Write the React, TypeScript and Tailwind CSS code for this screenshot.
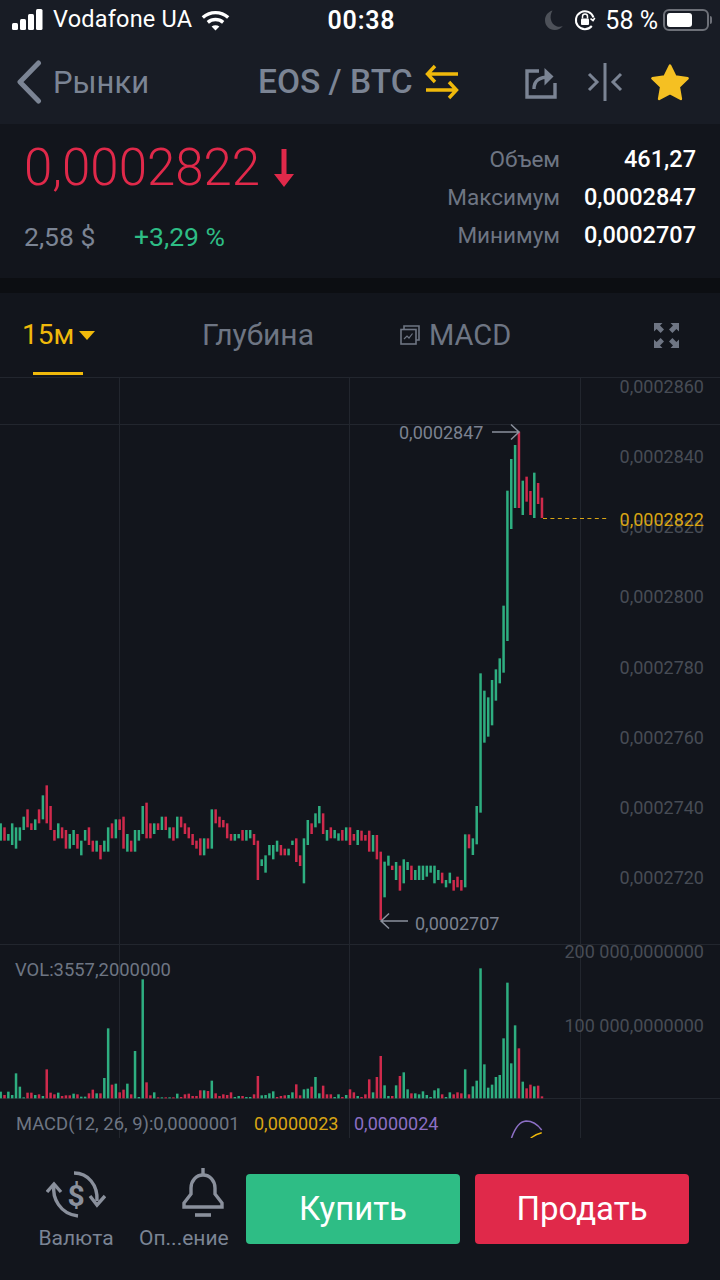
import React from "react";

type Side = "g" | "r";
type Candle = [number, number, Side];
type Vol = [number, Side];

const GREEN = "#2eae80";
const RED = "#cf2a4c";

// wick top/bottom, read off the chart (3x units, first run starts at y=770, second at y=660)
const candlesA: Candle[] = [
  [160,212,"g"],[172,212,"r"],[192,212,"g"],[160,225,"g"],[172,236,"g"],[172,212,"g"],[140,180,"g"],[118,172,"r"],[160,180,"r"],[148,180,"g"],
  [118,160,"r"],[76,148,"g"],[46,160,"r"],[108,180,"r"],[180,212,"r"],[160,205,"g"],[172,205,"r"],[180,236,"r"],[192,236,"g"],[180,225,"g"],
  [192,236,"r"],[212,256,"g"],[180,212,"g"],[172,225,"r"],[212,245,"r"],[212,245,"g"],[225,268,"r"],[212,245,"g"],[172,245,"g"],[160,205,"r"],
  [148,205,"g"],[148,180,"r"],[140,236,"r"],[192,245,"g"],[212,245,"r"],[180,245,"g"],[180,212,"g"],[108,192,"g"],[98,205,"r"],[160,205,"r"],
  [160,192,"g"],[160,180,"r"],[140,180,"g"],[140,180,"r"],[172,205,"g"],[172,212,"r"],[140,205,"g"],[140,172,"r"],[160,192,"r"],[172,205,"r"],
  [192,225,"r"],[212,236,"r"],[205,256,"r"],[205,256,"g"],[205,236,"r"],[118,236,"g"],[118,160,"r"],[140,172,"r"],[150,172,"r"],[160,205,"r"],
  [192,212,"r"],[192,212,"g"],[192,205,"g"],[180,212,"r"],[180,212,"g"],[180,205,"g"],[192,225,"r"],[212,330,"r"],[268,288,"g"],[256,308,"g"],
  [225,256,"g"],[225,268,"g"],[212,245,"g"],[225,256,"r"],[236,256,"r"],[236,256,"g"],[212,225,"g"],[205,276,"r"],[256,288,"r"],[205,340,"g"],
  [150,225,"g"],[160,192,"r"],[130,172,"g"],[108,160,"g"],[130,192,"r"],[180,212,"g"],[172,205,"r"],[180,205,"g"],[190,212,"g"],[180,212,"r"],
  [172,212,"g"],[172,225,"r"],[192,212,"r"],[180,225,"g"],
];

const candlesB: Candle[] = [
  [512,542,"r"],[525,542,"r"],[512,575,"r"],[525,575,"g"],[525,598,"r"],[575,780,"r"],[605,712,"g"],[587,617,"g"],[617,630,"r"],[606,660,"g"],
  [617,692,"r"],[598,670,"g"],[606,630,"g"],[617,660,"r"],[630,660,"g"],[617,660,"g"],[617,660,"g"],[617,650,"g"],[617,638,"g"],[617,670,"g"],
  [630,660,"g"],[638,670,"r"],[660,682,"g"],[638,670,"g"],[660,692,"r"],[650,682,"r"],[660,692,"r"],[523,682,"g"],[523,565,"r"],[535,585,"g"],
  [438,553,"g"],[40,458,"g"],[92,248,"g"],[112,230,"g"],[60,196,"g"],[28,122,"g"],[-5,70,"g"],[-163,38,"g"],[-508,-57,"g"],[-603,-393,"g"],
  [-645,-456,"g"],[-685,-456,"r"],[-538,-435,"g"],[-550,-475,"r"],[-507,-435,"r"],[-562,-426,"g"],[-531,-468,"r"],[-487,-426,"r"],
];

// bar tops in 3x units, zero line at 445, origin y=950
const volumes: Vol[] = [
  [425,"g"],[435,"r"],[425,"g"],[435,"g"],[370,"g"],[410,"g"],[442,"g"],[428,"r"],[428,"r"],[435,"g"],
  [433,"r"],[438,"g"],[358,"r"],[428,"r"],[433,"r"],[428,"g"],[438,"r"],[436,"r"],[436,"r"],[431,"g"],
  [433,"r"],[440,"g"],[440,"g"],[430,"r"],[419,"r"],[430,"g"],[430,"r"],[384,"g"],[235,"g"],[404,"r"],
  [401,"g"],[427,"r"],[419,"r"],[401,"g"],[433,"r"],[303,"g"],[441,"g"],[88,"g"],[397,"r"],[436,"r"],
  [427,"g"],[442,"r"],[442,"g"],[442,"r"],[442,"g"],[442,"r"],[431,"g"],[441,"r"],[433,"r"],[431,"r"],
  [438,"r"],[438,"r"],[421,"r"],[421,"g"],[423,"r"],[392,"g"],[430,"r"],[438,"r"],[433,"r"],[435,"r"],
  [427,"r"],[441,"g"],[438,"g"],[438,"r"],[441,"g"],[441,"g"],[433,"r"],[378,"r"],[436,"g"],[435,"g"],
  [430,"g"],[424,"g"],[441,"r"],[438,"r"],[436,"r"],[435,"g"],[427,"g"],[403,"r"],[436,"r"],[418,"g"],
  [416,"g"],[410,"r"],[381,"g"],[430,"g"],[407,"r"],[433,"r"],[433,"r"],[441,"g"],[433,"g"],[441,"r"],
  [435,"g"],[418,"r"],[427,"r"],[438,"g"],
  [441,"r"],[433,"r"],[388,"r"],[427,"g"],[381,"r"],[318,"r"],[406,"g"],[438,"g"],[438,"r"],[406,"g"],
  [378,"r"],[367,"g"],[418,"g"],[430,"r"],[430,"g"],[433,"g"],[424,"g"],[435,"g"],[441,"g"],[421,"g"],
  [415,"g"],[433,"r"],[441,"g"],[427,"g"],[433,"r"],[427,"r"],[430,"r"],[358,"g"],[433,"r"],[409,"g"],
  [392,"g"],[55,"g"],[343,"g"],[413,"g"],[404,"g"],[381,"g"],[375,"g"],[265,"g"],[98,"g"],[340,"g"],
  [226,"g"],[295,"r"],[395,"g"],[415,"r"],[404,"r"],[409,"g"],[407,"r"],[439,"r"],
];

const STEP = 3.839;
const colX = (i: number) => 0.67 + i * STEP - 1.25;

const axisLabels = [
  { text: "0,0002860", cls: "top-0" },
  { text: "0,0002840", cls: "top-[70px]" },
  { text: "0,0002820", cls: "top-[140px]" },
  { text: "0,0002800", cls: "top-[210px]" },
  { text: "0,0002780", cls: "top-[281px]" },
  { text: "0,0002760", cls: "top-[351px]" },
  { text: "0,0002740", cls: "top-[421px]" },
  { text: "0,0002720", cls: "top-[491px]" },
  { text: "200 000,0000000", cls: "top-[565px]" },
  { text: "100 000,0000000", cls: "top-[639px]" },
];

const ChartDrawing = () => (
  <svg className="absolute inset-0" width="720" height="761" viewBox="0 377 720 761">
    <g stroke="#22262e" strokeWidth="1">
      <path d="M0 377.5H720M0 424.5H720M0 944.5H720M0 1098.5H720" />
      <path d="M119.5 377V1138M349.5 377V1138M580.5 377V1138" />
    </g>
    {candlesA.map(([t, b, c], i) => (
      <rect key={i} x={colX(i)} y={770 + t / 3} width="2.5" height={(b - t) / 3} fill={c === "g" ? GREEN : RED} />
    ))}
    {candlesB.map(([t, b, c], i) => (
      <rect key={i} x={colX(i + 94)} y={660 + t / 3} width="2.5" height={(b - t) / 3} fill={c === "g" ? GREEN : RED} />
    ))}
    {volumes.map(([t, c], i) => (
      <rect key={i} x={colX(i)} y={950 + t / 3} width="2.5" height={(445 - t) / 3} fill={c === "g" ? GREEN : RED} />
    ))}
    <path d="M543 518.5H607" stroke="#d9a514" strokeWidth="1" strokeDasharray="4 3.4" />
    <path d="M492 432H519M511 424.5L519 432L511 439.5" stroke="#8a909c" strokeWidth="1.5" fill="none" />
    <path d="M408 921H381M389 913.5L381 921L389 928.5" stroke="#8a909c" strokeWidth="1.5" fill="none" />
    <path d="M511.5 1138C515 1128 519 1121.5 526 1121C533 1121 538 1125 541.7 1130" stroke="#8c6fc4" strokeWidth="1.5" fill="none" />
    <path d="M530.7 1138C534 1135.5 538 1133.5 541.7 1132.7" stroke="#f0b90b" strokeWidth="1.5" fill="none" />
  </svg>
);

const StatusBar = () => (
  <div className="grid h-[40px] grid-cols-3 items-center pl-3 pr-2 text-white">
    <div className="flex items-center">
      <svg width="32" height="22" viewBox="0 0 32 22" fill="#fff">
        <rect x="0" y="14" width="6" height="7" rx="1.5" />
        <rect x="8" y="10" width="6" height="11" rx="1.5" />
        <rect x="16" y="5" width="6" height="16" rx="1.5" />
        <rect x="24" y="0" width="6.5" height="21" rx="1.5" />
      </svg>
      <span className="ml-[9px] text-[23.5px] leading-none tracking-[0.2px] whitespace-nowrap">Vodafone UA</span>
      <svg className="ml-[9px] shrink-0" width="29" height="21" viewBox="0 0 29 21" fill="none" stroke="#fff" strokeWidth="3.4">
        <path d="M1.8 7.6C9.2 1 19.8 1 27.2 7.6" />
        <path d="M6.8 12.4C11.3 8.6 17.7 8.6 22.2 12.4" />
        <path d="M14.5 20.5L10.6 16.4C12.9 14.8 16.1 14.8 18.4 16.4Z" fill="#fff" stroke="none" />
      </svg>
    </div>
    <div className="pr-[1px] text-center text-[25px] leading-none font-semibold tracking-[0.8px]">00:38</div>
    <div className="flex items-center justify-end">
      <svg width="20" height="22" viewBox="0 0 20 22" fill="#4d5159">
        <path d="M8.5 1.5C5 7 6.2 15 13 17.4C15 18 17 18 18.8 17C16.8 19.8 13.9 21 10.8 21C5.4 21 1 16.8 1 11.2C1 6.6 4 2.8 8.5 1.5Z" />
      </svg>
      <svg className="ml-[10px]" width="22" height="22" viewBox="0 0 22 22" fill="none" stroke="#fff" strokeWidth="2">
        <path d="M19.5 8.5A9 9 0 1 0 17.8 17" />
        <path d="M20.8 9L19 11.5L16.5 9.6" strokeWidth="1.6" />
        <rect x="7" y="9.5" width="8" height="6.5" rx="1" fill="#fff" stroke="none" />
        <path d="M8.5 9.5V7.5A2.5 2.5 0 0 1 13.5 7.5V9.5" strokeWidth="1.5" />
      </svg>
      <span className="ml-[9px] text-[25px] leading-none whitespace-nowrap">58 %</span>
      <div className="ml-[5px] flex items-center">
        <div className="flex h-[22px] w-[46px] items-center rounded-[6px] border-2 border-[#6d7078] p-[2px]">
          <div className="h-full w-[25px] rounded-[3px] bg-white" />
        </div>
        <div className="ml-[1px] h-[8px] w-[2px] rounded-r bg-[#6d7078]" />
      </div>
    </div>
  </div>
);

const NavBar = () => (
  <div className="flex h-[84px] items-center text-[#7b8494]">
    <svg className="ml-[16px] shrink-0" width="26" height="44" viewBox="0 0 26 44" fill="none" stroke="#7b8494" strokeWidth="5" strokeLinecap="round" strokeLinejoin="round">
      <path d="M22.5 3L4 22L22.5 41" />
    </svg>
    <span className="ml-[11px] w-[205px] text-[31px] leading-none">Рынки</span>
    <span className="w-[167px] text-[33.5px] leading-none font-medium whitespace-nowrap">EOS / BTC</span>
    <svg className="shrink-0" width="34" height="36" viewBox="0 0 34 36" fill="none" stroke="#f0b90b" strokeWidth="3.4">
      <path d="M33 10H3M10 2L2.5 10L10 18" />
      <path d="M1 26H31M24 18L31.5 26L24 34" />
    </svg>
    <svg className="ml-[66px] shrink-0" width="32" height="34" viewBox="0 0 32 34" fill="none" stroke="#7b8494" strokeWidth="3.4">
      <path d="M14 6H2V32H30V18" />
      <path d="M9 24C9 15.5 14 12 25 12" />
      <path d="M19.5 3L28.5 11.5L19.5 20.5" fill="#7b8494" strokeWidth="0" />
    </svg>
    <svg className="ml-[30px] shrink-0" width="36" height="38" viewBox="0 0 36 38" fill="none" stroke="#7b8494" strokeWidth="3">
      <path d="M18 0V38" />
      <path d="M2 11L10 19L2 27M34 11L26 19L34 27" />
    </svg>
    <svg className="ml-[27px] shrink-0" width="40" height="38" viewBox="0 0 40 38">
      <path fill="#f5c022" stroke="#f5c022" strokeWidth="2.5" strokeLinejoin="round" d="M20 2.5L25.4 13.6L37.6 15.3L28.8 23.8L30.9 36L20 30.2L9.1 36L11.2 23.8L2.4 15.3L14.6 13.6Z" />
    </svg>
  </div>
);

const statRows = [
  { label: "Объем", value: "461,27" },
  { label: "Максимум", value: "0,0002847" },
  { label: "Минимум", value: "0,0002707" },
];

const PricePanel = () => (
  <div className="flex h-[154px] justify-between bg-[#12151c] pr-6 pl-6">
    <div>
      <div className="mt-[14px] flex items-center">
        <span className="text-[51px] leading-[60px] font-light tracking-[0px] text-[#e0294a]">0,0002822</span>
        <svg className="ml-[13px]" width="22" height="42" viewBox="0 0 22 42" fill="#e0294a">
          <path d="M8.5 2H13.5V27H21L11 40L1 27H8.5Z" />
        </svg>
      </div>
      <div className="mt-[24px] flex text-[26.5px] leading-[30px]">
        <span className="w-[110px] text-[#7b8494]">2,58 $</span>
        <span className="text-[#2ebd85]">+3,29 %</span>
      </div>
    </div>
    <div className="mt-[16px] grid grid-cols-[auto_136px] content-start text-[22.5px] leading-[38px]">
      {statRows.map((r) => (
        <React.Fragment key={r.label}>
          <span className="text-right text-[#6e7583]">{r.label}</span>
          <span className="text-right text-[23.5px] font-medium text-white">{r.value}</span>
        </React.Fragment>
      ))}
    </div>
  </div>
);

const Tabs = () => (
  <div className="flex h-[84px] items-center bg-[#12151c] text-[29px] text-[#6e7583]">
    <div className="relative flex h-full w-[202px] items-center pl-[22px] text-[#f0b90b]">
      <span className="text-[28px] leading-none">15м</span>
      <svg className="ml-[5px]" width="16" height="9" viewBox="0 0 16 9" fill="#f0b90b">
        <path d="M0 0H16L8 9Z" />
      </svg>
      <div className="absolute bottom-[2px] left-[33px] h-[3px] w-[50px] bg-[#f0b90b]" />
    </div>
    <span className="w-[198px] text-[30px] leading-none">Глубина</span>
    <svg className="shrink-0" width="20" height="20" viewBox="0 0 20 20" fill="none" stroke="#6e7583" strokeWidth="1.6">
      <path d="M4 4V1H19V15H16" />
      <rect x="1" y="4.5" width="15" height="14.5" />
      <path d="M4 14L7 11L9 13L12.5 8.5" strokeWidth="1.2" />
    </svg>
    <span className="ml-[9px] w-[225px] leading-none">MACD</span>
    <svg className="shrink-0" width="25" height="25" viewBox="0 0 25 25" fill="#6e7583">
      <path d="M0 0H8.5L6 2.6L10 6.6L6.6 10L2.6 6L0 8.5Z" />
      <path d="M25 0V8.5L22.4 6L18.4 10L15 6.6L19 2.6L16.5 0Z" />
      <path d="M0 25V16.5L2.6 19L6.6 15L10 18.4L6 22.4L8.5 25Z" />
      <path d="M25 25H16.5L19 22.4L15 18.4L18.4 15L22.4 19L25 16.5Z" />
    </svg>
  </div>
);

const Chart = () => (
  <div className="relative flex-1 overflow-hidden bg-[#12151c] text-[18px] leading-[20px] whitespace-nowrap">
    <ChartDrawing />
    {axisLabels.map((a) => (
      <span key={a.text} className={`absolute right-[16px] text-[#474c55] ${a.cls}`}>
        {a.text}
      </span>
    ))}
    <span className="absolute top-[133px] right-[16px] text-[#d9a514]">0,0002822</span>
    <span className="absolute top-[46px] left-[399px] text-[#7b8290]">0,0002847</span>
    <span className="absolute top-[537px] left-[415px] text-[#7b8290]">0,0002707</span>
    <span className="absolute top-[583px] left-[15px] text-[18.4px] text-[#6e7583]">VOL:3557,2000000</span>
    <div className="absolute top-[737px] left-[16px] flex">
      <span className="w-[238px] text-[18.4px] text-[#6e7583]">MACD(12, 26, 9):0,0000001</span>
      <span className="w-[100px] text-[#d9a514]">0,0000023</span>
      <span className="text-[#8c6fc4]">0,0000024</span>
    </div>
  </div>
);

const BottomBar = () => (
  <div className="flex h-[142px] bg-[#12151c] pt-[36px]">
    <div className="ml-[26px] flex w-[100px] flex-col items-center text-[#7b8494]">
      <svg className="-mt-[4px]" width="60" height="50" viewBox="0 0 60 50" fill="none" stroke="#8a909c" strokeWidth="3.4">
        <path d="M8 15C6 28 14 44 32 46" />
        <path d="M1 22L8 14L15 22" />
        <path d="M28 3C42 3 52 15 51 31" />
        <path d="M44 26L51 35L59 26" />
        <text x="30" y="36" textAnchor="middle" fill="#8a909c" stroke="none" fontSize="30" fontWeight="700" fontFamily="Roboto, sans-serif">$</text>
      </svg>
      <span className="mt-[6px] text-[21px] leading-[24px]">Валюта</span>
    </div>
    <div className="ml-[13px] flex w-[90px] flex-col text-[#7b8494]">
      <svg className="-mt-[6px] ml-[43px] shrink-0" width="42" height="52" viewBox="0 0 42 52" fill="none" stroke="#8a909c" strokeWidth="3.4">
        <path d="M21 0V6" />
        <path d="M9 26V20C9 13 14 7 21 7C28 7 33 13 33 20V26L40 35V39H2V35Z" />
        <path d="M13 47H29" strokeWidth="3.6" />
      </svg>
      <span className="mt-[6px] text-[21px] leading-[24px] whitespace-nowrap">Оп...ение</span>
    </div>
    <button className="ml-[17px] flex h-[70px] w-[214px] items-center justify-center rounded-[4px] bg-[#2ebd85] text-[33px] text-white">Купить</button>
    <button className="ml-[15px] flex h-[70px] w-[214px] items-center justify-center rounded-[4px] bg-[#e0294a] text-[33px] text-white">Продать</button>
  </div>
);

export default function App() {
  return (
    <div className="flex h-[1280px] w-[720px] flex-col overflow-hidden bg-[#181c25] font-[Roboto,sans-serif]">
      <StatusBar />
      <NavBar />
      <PricePanel />
      <div className="h-[15px] bg-[#0c0e12]" />
      <Tabs />
      <Chart />
      <BottomBar />
    </div>
  );
}
